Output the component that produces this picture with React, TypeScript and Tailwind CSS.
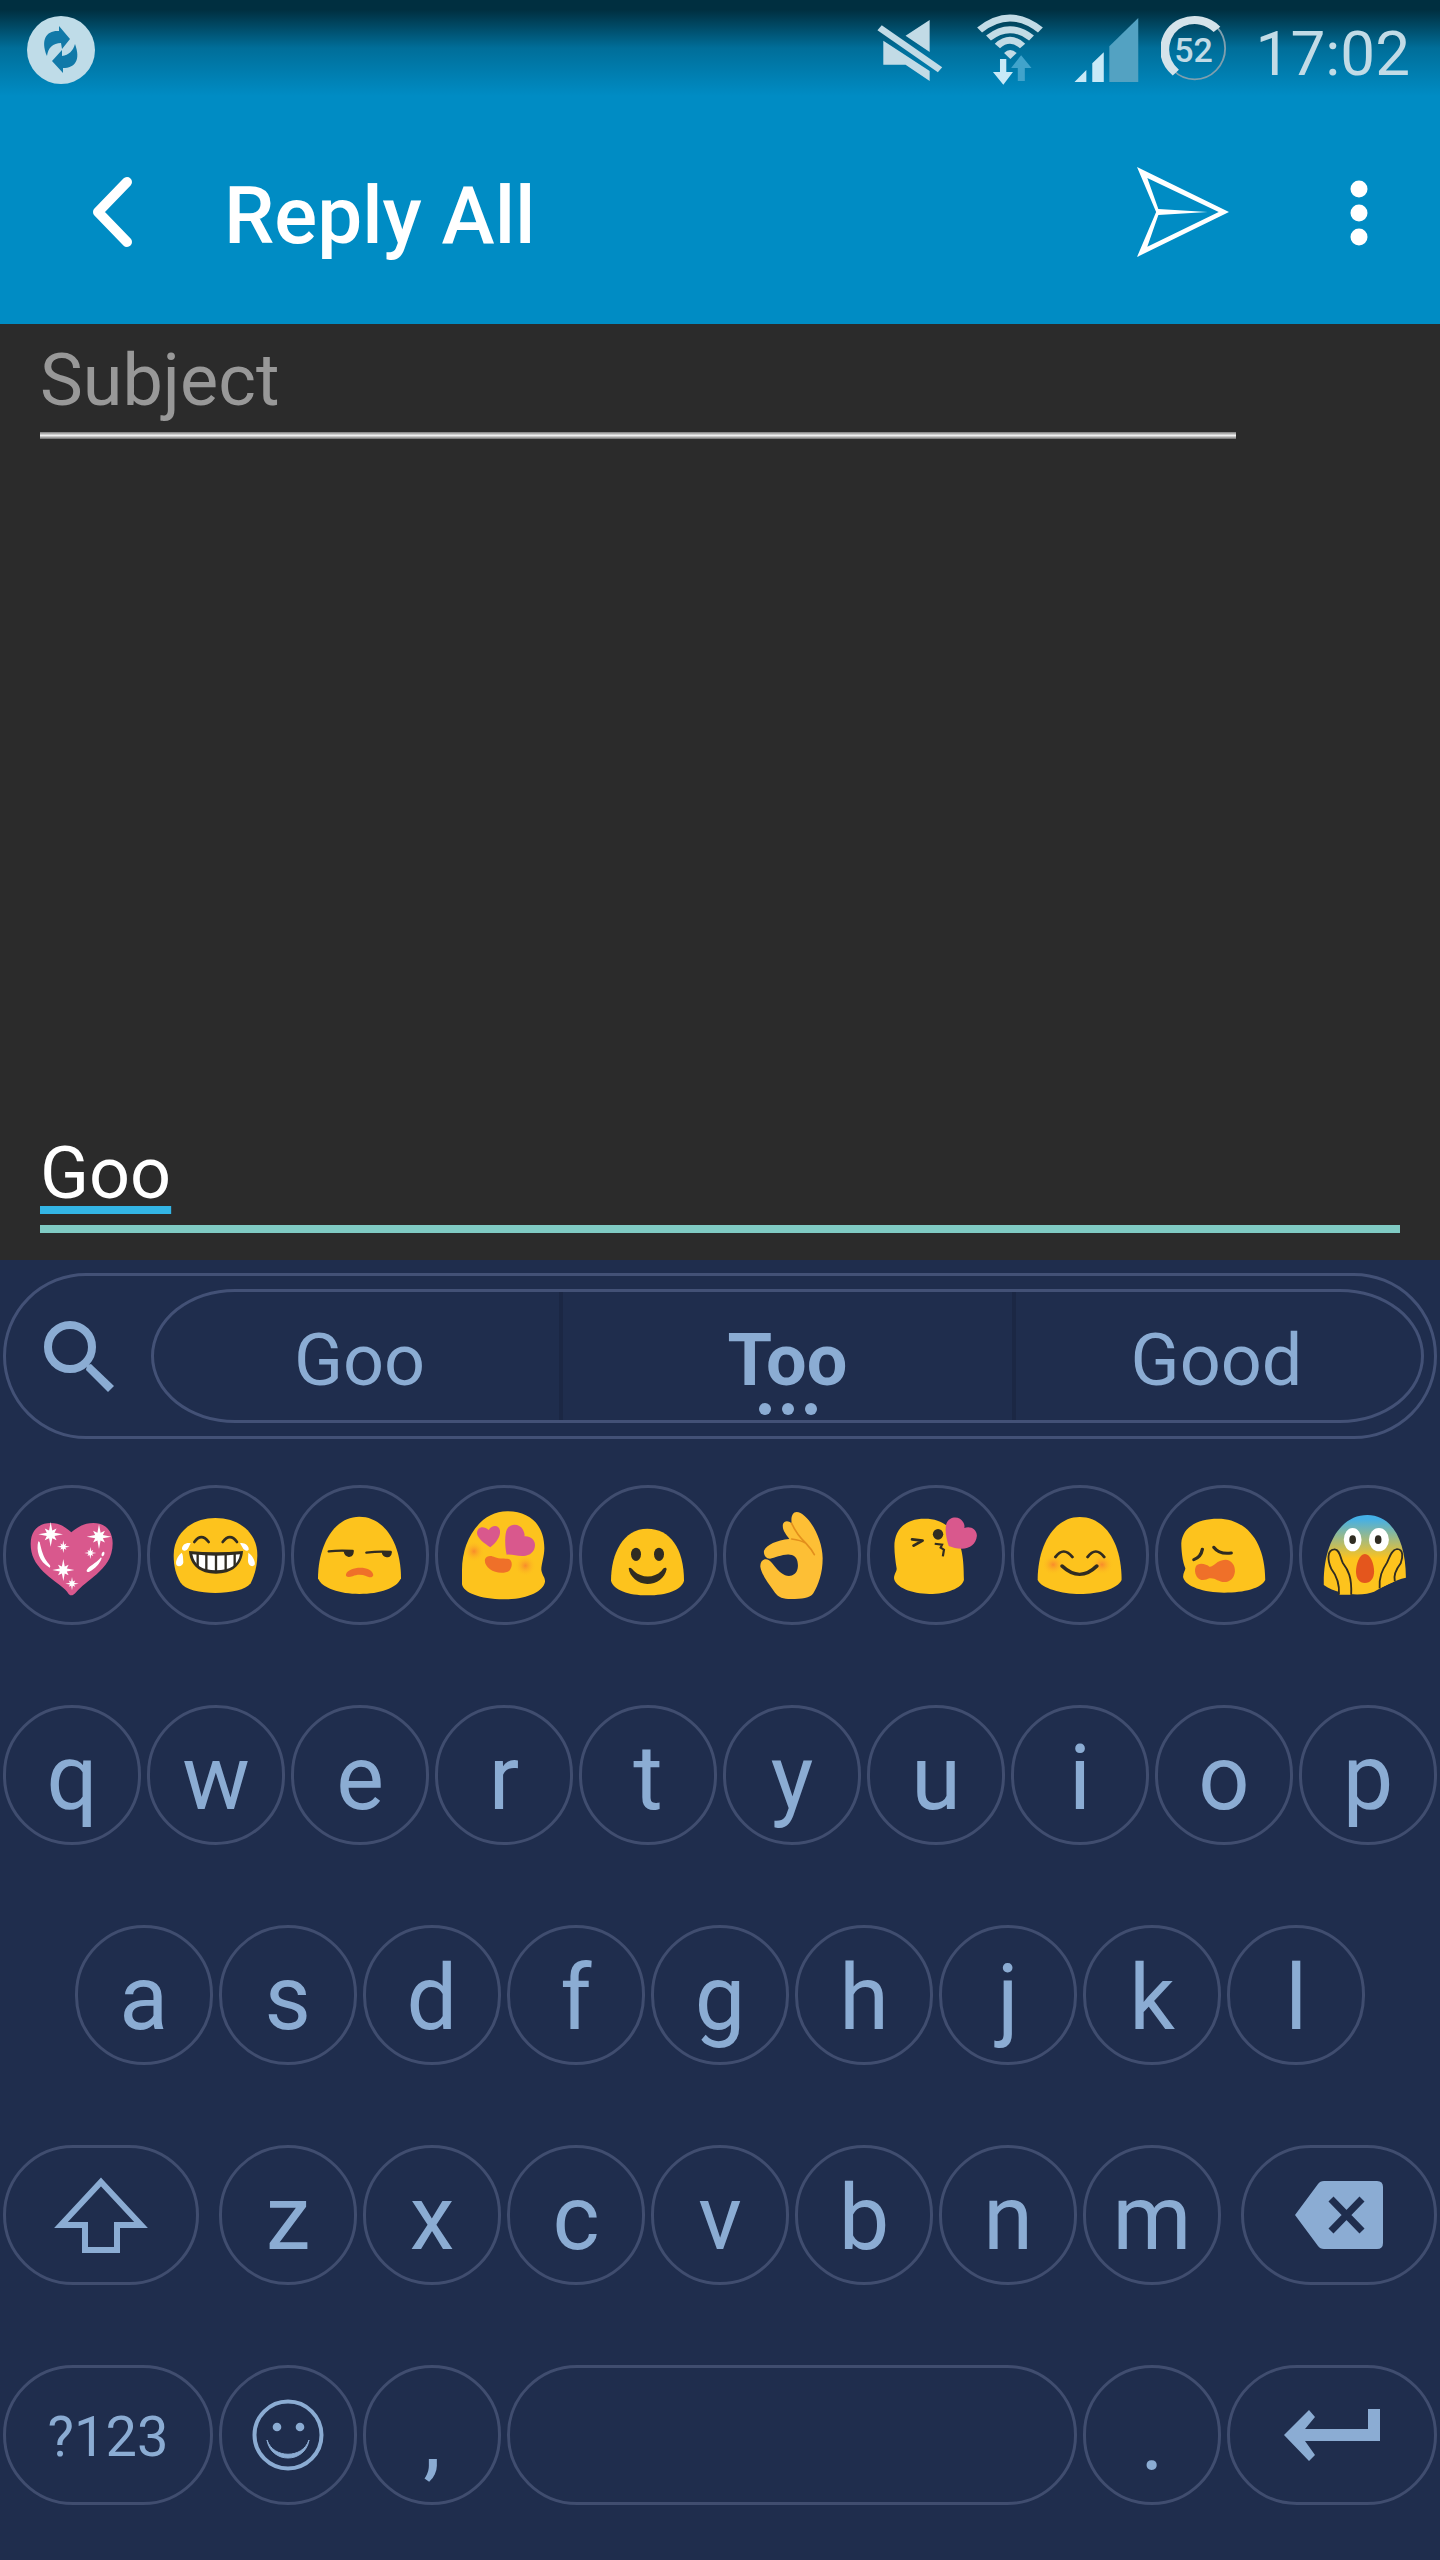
import type { ReactNode } from "react";

const YELLOW = "#fdc31d";
const INK = "#302c22";
const PINK = "#d9588d";
const ORANGE = "#ef7029";

function Art({ box, className, children }: { box: string; className: string; children: ReactNode }) {
  return (
    <svg viewBox={box} preserveAspectRatio="none" className={"shrink-0 " + className} aria-hidden="true">
      {children}
    </svg>
  );
}

function Sparkle({ x, y, r }: { x: number; y: number; r: number }) {
  const points: string[] = [];
  for (let i = 0; i < 16; i++) {
    const len = i % 4 === 0 ? r : i % 2 === 0 ? r * 0.68 : r * 0.34;
    const a = (i * Math.PI) / 8;
    points.push(`${x + len * Math.sin(a)},${y - len * Math.cos(a)}`);
  }
  return <polygon points={points.join(" ")} fill="#fff" />;
}

const emojis: { name: string; box: string; art: ReactNode }[] = [
  {
    name: "Sparkling heart",
    box: "18 54 396 402",
    art: (
      <>
        <path
          d="M213 376C207 376 203 366 196 359C176 341 150 325 130 305C105 280 92 255 92 222C92 182 115 159 152 159C182 159 200 175 214 187C228 175 250 159 280 159C318 159 338 184 338 220C338 265 315 290 290 313C265 334 243 350 229 366C223 373 219 376 213 376Z"
          fill={PINK}
        />
        <Sparkle x={152} y={193} r={37} />
        <Sparkle x={297} y={200} r={37} />
        <Sparkle x={190} y={230} r={19} />
        <Sparkle x={271} y={249} r={18} />
        <Sparkle x={190} y={300} r={33} />
        <Sparkle x={216} y={341} r={20} />
        <path d="M115 214C108 240 116 275 149 293C154 288 148 284 144 279C130 262 124 240 119 216Z" fill="#fff" />
        <path d="M303 262C294 275 275 284 263 296C257 303 260 308 268 305C286 297 300 280 305 265Z" fill="#fff" />
        <ellipse cx="309" cy="252" rx="4" ry="7" fill="#fff" transform="rotate(20 309 252)" />
      </>
    ),
  },
  {
    name: "Tears of joy",
    box: "450 54 396 402",
    art: (
      <>
        <path
          d="M646 144C720 144 772 190 772 255C772 290 762 320 752 340C738 360 692 369 646 369C600 369 555 360 541 337C528 315 521 290 521 255C521 190 575 144 646 144Z"
          fill={YELLOW}
        />
        <path d="M583 216Q604 187 626 216M668 216Q690 187 711 216" fill="none" stroke={INK} strokeWidth="8" strokeLinecap="round" />
        <path d="M567 243Q647 251 729 243C726 287 695 311 648 311C600 311 570 287 567 243Z" fill={INK} />
        <path d="M577 253Q647 261 720 253C714 287 690 301 648 301C606 301 584 287 577 253Z" fill="#fff" />
        <path d="M593 250V290M619 250V302M648 250V304M677 250V302M704 250V288" stroke={INK} strokeWidth="7" />
        <path
          d="M572 220C560 216 546 224 546 236C548 246 562 242 565 234ZM545 248C534 256 524 276 530 286C537 293 551 286 550 276C549 264 550 254 545 248ZM720 220C732 216 748 228 746 239C742 246 731 240 728 233ZM745 248C757 256 769 276 763 286C755 293 744 284 744 272Z"
          fill="#fff"
        />
      </>
    ),
  },
  {
    name: "Unamused",
    box: "882 54 396 402",
    art: (
      <>
        <path
          d="M1078 140C1150 140 1203 215 1203 325C1190 355 1140 372 1078 372C1020 372 965 355 954 325C954 230 1000 140 1078 140Z"
          fill={YELLOW}
        />
        <path d="M986 244Q1020 240 1058 243M1099 248Q1140 243 1172 246" stroke={INK} strokeWidth="7" fill="none" strokeLinecap="round" />
        <path d="M1031 244H1061C1062 256 1053 262 1046 261C1038 260 1032 254 1031 244ZM1145 246H1175C1176 258 1167 263 1160 262C1152 261 1146 256 1145 246Z" fill={INK} />
        <path
          d="M1038 313C1045 289 1115 284 1120 315C1118 325 1105 322 1098 318C1085 313 1070 313 1058 319C1045 323 1036 322 1038 313Z"
          fill={ORANGE}
        />
      </>
    ),
  },
  {
    name: "Heart eyes",
    box: "24 54 396 402",
    art: (
      <>
        <path
          d="M232 124C300 124 343 165 343 235C343 260 333 285 334 300C337 318 346 322 345 335C340 365 290 388 221 388C150 388 100 368 96 343V300C96 210 150 124 232 124Z"
          fill={YELLOW}
        />
        <circle cx="132" cy="244" r="32" fill="url(#blush)" />
        <circle cx="286" cy="287" r="32" fill="url(#blush)" />
        <path d="M181 232C165 222 142 205 141 190C141 171 160 165 176 180C186 163 208 164 210 182C212 200 198 218 181 232Z" fill={PINK} />
        <path
          d="M230 254C224 230 224 190 231 178C240 160 268 160 278 178C283 188 285 195 283 199C300 197 315 208 315 225C315 245 300 257 280 258C262 259 246 252 230 254Z"
          fill={PINK}
        />
        <path
          d="M165 268C170 255 185 256 195 262C208 268 225 265 236 267C248 272 248 290 238 302C225 312 195 310 180 298C168 288 163 278 165 268Z"
          fill={ORANGE}
        />
      </>
    ),
  },
  {
    name: "Smile",
    box: "456 54 396 402",
    art: (
      <>
        <path
          d="M652 176C720 176 762 235 762 332C755 360 710 376 652 376C595 376 550 360 543 332C543 250 580 176 652 176Z"
          fill={YELLOW}
        />
        <ellipse cx="618" cy="253" rx="15" ry="20" fill={INK} />
        <ellipse cx="687" cy="253" rx="15" ry="20" fill={INK} />
        <path
          d="M596 295C600 290 606 295 612 303C635 325 672 325 694 303C700 293 708 290 710 297C705 325 680 342 652 342C625 342 598 320 596 295Z"
          fill={INK}
        />
      </>
    ),
  },
  {
    name: "OK hand",
    box: "888 54 396 402",
    art: (
      <>
        <path
          d="M1100 126C1130 126 1178 200 1178 265C1178 310 1165 345 1150 370C1140 385 1115 387 1083 387C1060 387 1045 382 1035 368C1015 340 995 315 991 290C990 272 1005 262 1017 271C1030 280 1038 298 1055 310C1070 322 1098 322 1103 295C1106 275 1100 255 1080 254C1060 251 1035 264 1020 266C1008 266 1000 255 1002 242C1010 225 1040 210 1078 207C1070 195 1055 180 1059 162C1062 152 1075 150 1085 160C1082 140 1088 126 1100 126Z"
          fill="#fdbf35"
        />
        <path d="M1085 207Q1112 210 1128 220M1085 160Q1100 194 1128 220Q1145 238 1153 254" fill="none" stroke="#e38f1c" strokeWidth="5" strokeLinecap="round" />
      </>
    ),
  },
  {
    name: "Blowing a kiss",
    box: "27 54 357 402",
    art: (
      <>
        <path
          d="M175 146C215 146 240 165 258 195C275 230 281 260 281 330C275 355 235 372 188 372C140 372 95 352 92 325C92 310 100 305 99 295C96 275 93 250 93 230C93 180 120 146 175 146Z"
          fill={YELLOW}
        />
        <path d="M141 208L169 212L145 227" fill="none" stroke={INK} strokeWidth="8" strokeLinecap="round" strokeLinejoin="round" />
        <ellipse cx="211" cy="193" rx="14" ry="16" fill={INK} />
        <path d="M202 221L222 224L218 233L227 239L224 259" fill="none" stroke={INK} strokeWidth="6" />
        <path
          d="M240 228C234 210 228 180 234 160C242 138 270 136 280 158C283 165 283 170 282 174C298 166 317 178 316 198C314 222 298 236 275 236C262 236 250 233 240 228Z"
          fill={PINK}
        />
      </>
    ),
  },
  {
    name: "Blushing",
    box: "416 54 357 402",
    art: (
      <>
        <path
          d="M594 141C660 141 707 215 707 330C695 357 645 372 594 372C545 372 490 355 480 330C480 225 525 141 594 141Z"
          fill={YELLOW}
        />
        <circle cx="522" cy="284" r="31" fill="url(#blush)" />
        <circle cx="654" cy="284" r="31" fill="url(#blush)" />
        <path d="M528 261Q550 228 574 261M615 261Q637 228 660 261" fill="none" stroke={INK} strokeWidth="8" strokeLinecap="round" />
        <path d="M546 288Q594 338 640 288" fill="none" stroke={INK} strokeWidth="10" strokeLinecap="round" />
      </>
    ),
  },
  {
    name: "Weary",
    box: "806 54 357 402",
    art: (
      <>
        <path
          d="M968 146C1045 146 1096 215 1096 330C1085 355 1040 368 985 368C930 368 880 350 874 322C873 310 880 302 880 295C872 275 869 240 869 220C872 170 915 146 968 146Z"
          fill={YELLOW}
        />
        <path d="M903 269Q922 262 926 238M957 232Q972 254 1004 249" fill="none" stroke={INK} strokeWidth="9" strokeLinecap="round" />
        <path
          d="M908 290C915 275 938 283 945 290C955 292 965 270 988 269C1005 270 1015 285 1014 305C1012 325 1000 336 985 336C970 336 960 322 945 325C935 330 920 335 911 320C905 308 905 298 908 290Z"
          fill={ORANGE}
        />
      </>
    ),
  },
  {
    name: "Screaming",
    box: "1195 54 357 402",
    art: (
      <>
        <path
          d="M1372 135C1440 135 1476 215 1476 323C1445 330 1415 350 1390 365C1365 377 1300 380 1254 345C1252 220 1300 135 1372 135Z"
          fill="url(#fear)"
        />
        <ellipse cx="1332" cy="209" rx="24" ry="35" fill="#fff" />
        <ellipse cx="1403" cy="209" rx="27" ry="35" fill="#fff" />
        <ellipse cx="1332" cy="209" rx="9" ry="13" fill={INK} />
        <ellipse cx="1401" cy="209" rx="9" ry="13" fill={INK} />
        <path d="M1365 252C1381 252 1390 285 1390 304C1390 326 1380 339 1365 339C1350 339 1341 326 1341 304C1341 285 1350 252 1365 252Z" fill="#e4561d" />
        <path
          d="M1295 374C1297 340 1288 316 1274 296C1264 272 1262 240 1282 238C1297 236 1298 262 1305 278C1320 300 1330 320 1328 374M1405 355C1403 320 1412 300 1425 278C1432 262 1436 240 1452 237C1470 238 1468 262 1462 280C1448 300 1442 315 1446 334"
          fill={YELLOW}
          stroke={INK}
          strokeWidth="5"
        />
      </>
    ),
  },
];

function Key({ label, className = "", children }: { label: string; className?: string; children?: ReactNode }) {
  return (
    <button
      type="button"
      aria-label={label}
      className={
        "flex h-[140px] min-w-0 flex-1 items-center justify-center rounded-full border-[3px] border-[#404d6f] leading-none " +
        className
      }
    >
      {children}
    </button>
  );
}

function LetterKey({ letter }: { letter: string }) {
  return (
    <Key label={letter} className="pt-2 text-[90px]">
      {letter}
    </Key>
  );
}

function StatusBar() {
  return (
    <div className="flex h-24 items-start justify-between bg-linear-to-b from-[#002f40] from-10% via-[#006e99] via-50% to-[#008cc4] pt-3 pr-[30px] pl-[27px] text-[#c2dbe6]">
      <Art box="0 0 68 76" className="h-[76px] w-[68px]">
        <ellipse cx="34" cy="38" rx="34" ry="34" fill="#bfdce8" />
        <g fill="#1179a8">
          <path d="M20 44C13 27 20 18 32 19L32 14L43 27L35 37L34 31C26 31 21 36 20 44Z" />
          <path d="M48 32C54 48 48 56 36 56L36 61L25 49L35 38L35 44C42 43 46 39 48 32Z" />
        </g>
      </Art>
      <div className="flex items-start">
        <Art box="49 36 178 228" className="mr-[34px] h-[76px] w-[66px]">
          <path d="M191 60V156L126 107ZM66 122L191 213V243L126 194H66Z" fill="currentColor" />
          <path d="M56 83L219 209" stroke="currentColor" strokeWidth="19" />
        </Art>
        <Art box="319 36 178 228" className="mr-[30px] h-[76px] w-[66px]">
          <g fill="none" stroke="currentColor" strokeWidth="20">
            <path d="M326 90Q408 18 490 90" />
            <path d="M350 114Q408 64 466 114" />
            <path d="M374 138Q408 104 442 138" />
          </g>
          <path d="M392 159Q408 141 426 159L409 177Z" fill="currentColor" />
          <path d="M381 177H398V216H416L390 254L362 216H381Z" fill="#c8e9f7" />
          <path d="M438 166L466 204H448V243H429V204H411Z" fill="#41a3cb" />
        </Art>
        <Art box="578 36 178 228" className="mr-[22px] h-[76px] w-[66px]">
          <path d="M582 246L614 210V246ZM630 246V190L661 157V246Z" fill="#c8e9f7" />
          <path d="M676 246V139L754 54V246Z" fill="#53a2c2" />
        </Art>
        <div className="mr-[29px] grid place-items-center">
          <Art box="816 36 178 228" className="col-start-1 row-start-1 h-[76px] w-[66px]">
            <ellipse cx="907" cy="145" rx="82" ry="93" fill="none" stroke="#7f9fae" strokeWidth="5" />
            <path d="M856 218C806 170 824 90 872 68C908 52 944 62 967 88" fill="none" stroke="#d5e3ea" strokeWidth="24" />
          </Art>
          <span className="col-start-1 row-start-1 text-[34px] leading-none font-medium">52</span>
        </div>
        <span className="pt-1.5 text-[62px] leading-[72px]">17:02</span>
      </div>
    </div>
  );
}

function AppBar() {
  return (
    <header className="flex h-[228px] items-center bg-[#008cc4] pt-1 pr-[72px] pl-[92px] text-white">
      <button type="button" aria-label="Back">
        <Art box="0 0 40 72" className="h-[72px] w-10">
          <path d="M35 6L6 36L35 66" fill="none" stroke="currentColor" strokeWidth="10" strokeLinecap="round" strokeLinejoin="round" />
        </Art>
      </button>
      <h1 className="ml-[92px] flex-1 pt-[7px] text-[80px] leading-[96px] font-medium">Reply All</h1>
      <button type="button" aria-label="Send">
        <Art box="748 501 250 270" className="h-[90px] w-[92px]">
          <path
            d="M748 501L998 636L748 771L800 636ZM776 534L806 627L940 636L806 645L776 740L970 636Z"
            fill="currentColor"
            fillRule="evenodd"
          />
        </Art>
      </button>
      <button type="button" aria-label="More options" className="ml-[121px] pt-1">
        <Art box="0 0 18 68" className="h-[68px] w-[18px]">
          <g fill="currentColor">
            <circle cx="9" cy="9" r="8.5" />
            <circle cx="9" cy="33" r="8.5" />
            <circle cx="9" cy="57" r="8.5" />
          </g>
        </Art>
      </button>
    </header>
  );
}

function Compose() {
  return (
    <main className="flex flex-1 flex-col pr-10 pb-[27px] pl-10">
      <div className="mr-[164px]">
        <input
          type="text"
          aria-label="Subject"
          placeholder="Subject"
          className="block h-[108px] w-full pt-1.5 text-[72px] text-white outline-none placeholder:text-[#989898]"
        />
        <div className="h-[7px] bg-linear-to-b from-[#7d7d7d] via-[#f2f2f2] to-[#6a6a6a]" />
      </div>
      <input
        type="text"
        aria-label="Message"
        defaultValue="Goo"
        className="mt-auto block h-[112px] w-full border-b-8 border-[#80cbc4] text-[72px] text-white underline decoration-[#33b5e5] decoration-8 underline-offset-8 outline-none"
      />
    </main>
  );
}

function Suggestions() {
  return (
    <div className="flex h-[166px] items-center rounded-full border-[3px] border-[#435176] pr-2.5">
      <button type="button" aria-label="Search" className="flex w-[145px] shrink-0 justify-center">
        <Art box="0 0 72 72" className="size-[72px]">
          <circle cx="27" cy="27" r="22" fill="none" stroke="currentColor" strokeWidth="8" />
          <path d="M44 45L48 44L71 66L65 72L43 50Z" fill="currentColor" />
        </Art>
      </button>
      <div className="grid h-[134px] flex-1 grid-cols-[405fr_457fr_405fr] rounded-[84px/67px] border-[3px] border-[#435176] text-[72px] leading-[84px]">
        <button type="button" className="pt-2.5 pl-1.5">
          Goo
        </button>
        <button type="button" className="relative border-x-4 border-[#1b2744] pt-2.5 font-bold">
          Too
          <span className="absolute inset-x-0 bottom-[5px] flex justify-center gap-[11px]">
            <i className="size-3 rounded-full bg-current" />
            <i className="size-3 rounded-full bg-current" />
            <i className="size-3 rounded-full bg-current" />
          </span>
        </button>
        <button type="button" className="pt-2.5 pr-1">
          Good
        </button>
      </div>
    </div>
  );
}

function Keyboard() {
  return (
    <section aria-label="Keyboard" className="bg-[#1f2d4d] px-[3px] pt-[13px] pb-[55px] text-[#8bacd3]">
      <Suggestions />
      <div className="mt-[46px] flex flex-col gap-20">
        <div className="flex gap-1.5">
          {emojis.map((e) => (
            <Key key={e.name} label={e.name}>
              <Art box={e.box} className="h-[134px] w-[132px]">
                <defs>
                  <radialGradient id="blush">
                    <stop offset="0" stopColor="#f98b2c" />
                    <stop offset="1" stopColor="#fdc31d" stopOpacity="0" />
                  </radialGradient>
                  <linearGradient id="fear" x1="0" y1="0" x2="0" y2="1">
                    <stop offset="0.05" stopColor="#45b0e6" />
                    <stop offset="0.55" stopColor="#fdc31d" />
                  </linearGradient>
                </defs>
                {e.art}
              </Art>
            </Key>
          ))}
        </div>
        <div className="flex gap-1.5">
          {[..."qwertyuiop"].map((c) => (
            <LetterKey key={c} letter={c} />
          ))}
        </div>
        <div className="flex gap-1.5 px-[5%]">
          {[..."asdfghjkl"].map((c) => (
            <LetterKey key={c} letter={c} />
          ))}
        </div>
        <div className="grid grid-cols-[196fr_1002fr_196fr] gap-5">
          <Key label="Shift">
            <Art box="0 0 96 76" className="h-[76px] w-24">
              <path d="M48 5L88 48H64V73H32V48H8Z" fill="none" stroke="currentColor" strokeWidth="6" />
            </Art>
          </Key>
          <div className="flex gap-1.5">
            {[..."zxcvbnm"].map((c) => (
              <LetterKey key={c} letter={c} />
            ))}
          </div>
          <Key label="Backspace">
            <Art box="0 0 88 68" className="h-[68px] w-[88px]">
              <path
                d="M23 3Q25 0 29 0H82Q88 0 88 6V62Q88 68 82 68H29Q25 68 23 65L0 34Z"
                fill="currentColor"
              />
              <path d="M36 18L67 50M67 18L36 50" stroke="#1f2d4d" strokeWidth="7" />
            </Art>
          </Key>
        </div>
        <div className="grid grid-cols-[210fr_138fr_138fr_570fr_138fr_210fr] gap-1.5">
          <Key label="Symbols" className="pt-1 text-[56px]">
            ?123
          </Key>
          <Key label="Emoji">
            <Art box="0 0 72 72" className="size-[72px]">
              <circle cx="36" cy="36" r="33.5" fill="none" stroke="currentColor" strokeWidth="4" />
              <circle cx="25" cy="28" r="4.3" fill="currentColor" />
              <circle cx="48" cy="28" r="4.3" fill="currentColor" />
              <path d="M15 41C19 65 53 65 57 41C51 60 21 60 15 41Z" fill="currentColor" stroke="currentColor" />
            </Art>
          </Key>
          <LetterKey letter="," />
          <Key label="Space" />
          <LetterKey letter="." />
          <Key label="Enter">
            <Art box="0 0 96 54" className="h-[54px] w-24">
              <path d="M84 1H96V33H21L31 47L25 53L0 27L25 2L31 9L21 21H84Z" fill="currentColor" />
            </Art>
          </Key>
        </div>
      </div>
    </section>
  );
}

export default function App() {
  return (
    <div className="flex min-h-screen flex-col bg-[#2b2b2b] font-[Roboto,sans-serif]">
      <StatusBar />
      <AppBar />
      <Compose />
      <Keyboard />
    </div>
  );
}
